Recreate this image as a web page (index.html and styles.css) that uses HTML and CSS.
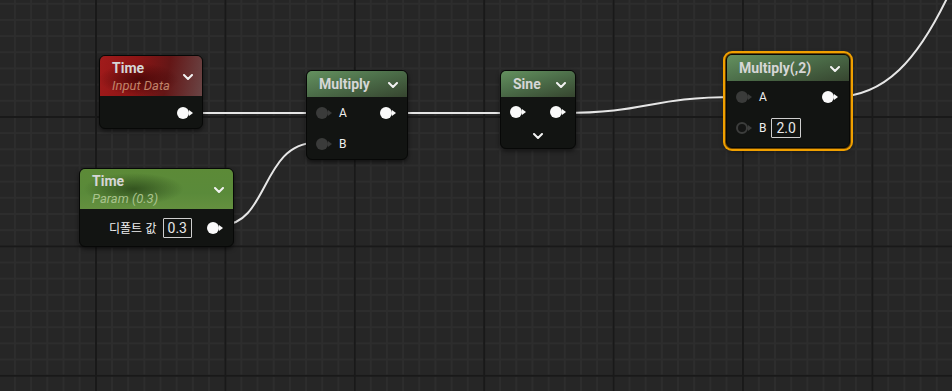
FILE: index.html
```html
<!DOCTYPE html>
<html lang="ko">
<head>
  <meta charset="UTF-8" />
  <title>Material Graph</title>
  <link rel="stylesheet" href="styles.css">
</head>
<body>
  <div class="graph">
    <svg class="wires" width="952" height="391" viewBox="0 0 952 391">
      <path d="M192 113 H315" />
      <path d="M222 225 C 268 225, 262 143, 315 143" />
      <path d="M392 113 H510" />
      <path d="M562 113 C 650 113, 648 97, 736 97" />
      <path d="M834 97 C 885 97, 918 60, 950 -8" />
    </svg>

    <!-- Time : Input Data -->
    <div class="node n-time">
      <div class="head head-red">
        <div class="titles">
          <div class="title">Time</div>
          <div class="sub sub-red">Input Data</div>
        </div>
        <svg class="chev" viewBox="0 0 10 6"><polyline points="1,1 5,5 9,1" /></svg>
      </div>
      <div class="body">
        <div class="row row-out"><span class="pin on"></span></div>
      </div>
    </div>

    <!-- Time : Param -->
    <div class="node n-param">
      <div class="head head-green">
        <div class="titles">
          <div class="title">Time</div>
          <div class="sub sub-green">Param (0.3)</div>
        </div>
        <svg class="chev" viewBox="0 0 10 6"><polyline points="1,1 5,5 9,1" /></svg>
      </div>
      <div class="body">
        <div class="row row-out">
          <span class="label kr">디폴트 값</span>
          <span class="value">0.3</span>
          <span class="pin on"></span>
        </div>
      </div>
    </div>

    <!-- Multiply -->
    <div class="node n-mul">
      <div class="head head-fn">
        <div class="title">Multiply</div>
        <svg class="chev" viewBox="0 0 10 6"><polyline points="1,1 5,5 9,1" /></svg>
      </div>
      <div class="body body-fn">
        <div class="row">
          <span class="pin linked"></span><span class="label">A</span>
          <span class="spacer"></span><span class="pin on"></span>
        </div>
        <div class="row">
          <span class="pin linked"></span><span class="label">B</span>
        </div>
      </div>
    </div>

    <!-- Sine -->
    <div class="node n-sine">
      <div class="head head-fn">
        <div class="title">Sine</div>
        <svg class="chev" viewBox="0 0 10 6"><polyline points="1,1 5,5 9,1" /></svg>
      </div>
      <div class="body body-fn">
        <div class="row">
          <span class="pin on"></span>
          <span class="spacer"></span><span class="pin on"></span>
        </div>
        <div class="more">
          <svg class="chev" viewBox="0 0 10 6"><polyline points="1,1 5,5 9,1" /></svg>
        </div>
      </div>
    </div>

    <!-- Multiply(,2) selected -->
    <div class="node n-mul2 selected">
      <div class="head head-fn">
        <div class="title">Multiply(,2)</div>
        <svg class="chev" viewBox="0 0 10 6"><polyline points="1,1 5,5 9,1" /></svg>
      </div>
      <div class="body body-fn">
        <div class="row">
          <span class="pin linked"></span><span class="label">A</span>
          <span class="spacer"></span><span class="pin on"></span>
        </div>
        <div class="row">
          <span class="pin empty"></span><span class="label">B</span>
          <span class="value">2.0</span>
        </div>
      </div>
    </div>
  </div>
</body>
</html>
```

FILE: styles.css
```css
/* Reset & base */
* { box-sizing: border-box; margin: 0; padding: 0; }
body { font-family: Roboto, 'Noto Sans', sans-serif; background: #262626; color: #ddd; }

/* Graph canvas with major / minor grid */
.graph {
  position: relative;
  width: 952px; height: 391px;
  overflow: hidden;
  background-color: #262626;
  background-image:
    linear-gradient(to right, #191919 2px, transparent 2px),
    linear-gradient(to bottom, #191919 2px, transparent 2px),
    linear-gradient(to right, #2d2d2d 2px, transparent 2px),
    linear-gradient(to bottom, #2d2d2d 2px, transparent 2px);
  background-size: 129.4px 129.4px, 129.4px 129.4px, 16.175px 16.175px, 16.175px 16.175px;
  background-position: 95px 116px, 95px 116px, 14px 2.8px, 14px 2.8px;
}

.wires { position: absolute; left: 0; top: 0; }
.wires path { fill: none; stroke: #e6e6e6; stroke-width: 2; }

/* Nodes sit on the canvas at their own coordinates */
.node {
  position: absolute;
  display: flex; flex-direction: column;
  background: #121412;
  border: 1px solid #070807;
  border-radius: 6px;
  box-shadow: 0 2px 4px rgba(0,0,0,0.55);
  overflow: hidden;
}
.n-time  { left: 99px;  top: 55px;  width: 104px; height: 74px; }
.n-param { left: 79px;  top: 168px; width: 155px; height: 79px; }
.n-mul   { left: 306px; top: 70px;  width: 102px; height: 90px; }
.n-sine  { left: 500px; top: 70px;  width: 76px;  height: 79px; }
.n-mul2  { left: 726px; top: 54px;  width: 124px; height: 94px; }

.node.selected {
  overflow: visible;
  box-shadow: 0 0 0 1px #6a4300, 0 0 0 3px #f0a000, 0 2px 6px rgba(0,0,0,0.6);
}
.node.selected .head { border-radius: 5px 5px 0 0; }

/* Headers */
.head {
  display: flex; align-items: center; justify-content: space-between;
  padding: 0 9px 0 12px;
  flex: none;
}
.head-red {
  height: 40px;
  background:
    radial-gradient(ellipse 40px 16px at 38% 58%, rgba(60,4,4,0.75), transparent),
    linear-gradient(100deg, #a11b1b 0%, #8c1515 35%, #641616 65%, #6a4545 100%);
}
.head-green {
  height: 40px;
  background:
    radial-gradient(ellipse 50px 16px at 35% 50%, rgba(20,40,10,0.55), transparent),
    linear-gradient(180deg, #5c8a37 0%, #5a8a3a 60%, #64903f 100%);
}
.head-fn {
  height: 26px;
  background: linear-gradient(165deg, #64915f 0%, #4d6f4a 45%, #36452f 100%);
}

.titles { display: flex; flex-direction: column; gap: 1px; }
.title { font-size: 14px; font-weight: 700; color: #d6d6d6; line-height: 17px; }
.sub { font-size: 13px; font-style: italic; line-height: 15px; }
.sub-red { color: #c0846a; }
.sub-green { color: #a9c38d; }

.chev { width: 10px; height: 6px; flex: none; margin-top: 2px; }
.chev polyline { fill: none; stroke: #f2f2f2; stroke-width: 2; stroke-linecap: round; stroke-linejoin: round; }

/* Bodies and pin rows */
.body { flex: 1; display: flex; flex-direction: column; justify-content: center; padding: 0 10px 0 9px; }
.n-time .body { padding: 2px 9px 0 9px; }
.body-fn { justify-content: flex-start; padding-top: 8px; gap: 16px; }
.n-mul .body-fn, .n-mul2 .body-fn { padding-right: 11px; }
.n-mul .body-fn { padding-top: 9px; gap: 17px; }
.n-sine .body-fn { padding-right: 9px; }
.n-mul2 .body-fn { padding-top: 9px; gap: 17px; }

.row { display: flex; align-items: center; height: 14px; }
.row-out { justify-content: flex-end; }
.spacer { flex: 1; }

.label { font-size: 12px; color: #eee; margin-left: 7px; }
.label.kr { font-family: 'Noto Sans CJK KR', 'Noto Sans', sans-serif; font-size: 12px; margin: 0 6px 0 0; }

.value {
  font-size: 14px; color: #e8e8e8;
  border: 1px solid #cfcfcf; border-radius: 1px;
  padding: 0 4px; line-height: 18px; height: 20px;
  margin-right: 15px;
}
.n-mul2 .value { margin-left: 5px; }

/* Pins: dot with a small arrow nub */
.pin { position: relative; width: 12px; height: 12px; border-radius: 50%; flex: none; margin-right: 4px; }
.pin::after {
  content: ''; position: absolute; right: -4px; top: 3px;
  border-left: 4px solid; border-top: 3px solid transparent; border-bottom: 3px solid transparent;
}
.pin.on { background: #fafafa; }
.pin.on::after { border-left-color: #fafafa; }
.pin.linked { background: #3a3b3a; }
.pin.linked::after { border-left-color: #3a3b3a; }
.pin.empty { background: #141514; border: 2px solid #3c3d3c; }
.pin.empty::after { right: -6px; top: 1px; border-left-color: #3c3d3c; }

.more { display: flex; justify-content: center; margin-top: -4px; }
```
